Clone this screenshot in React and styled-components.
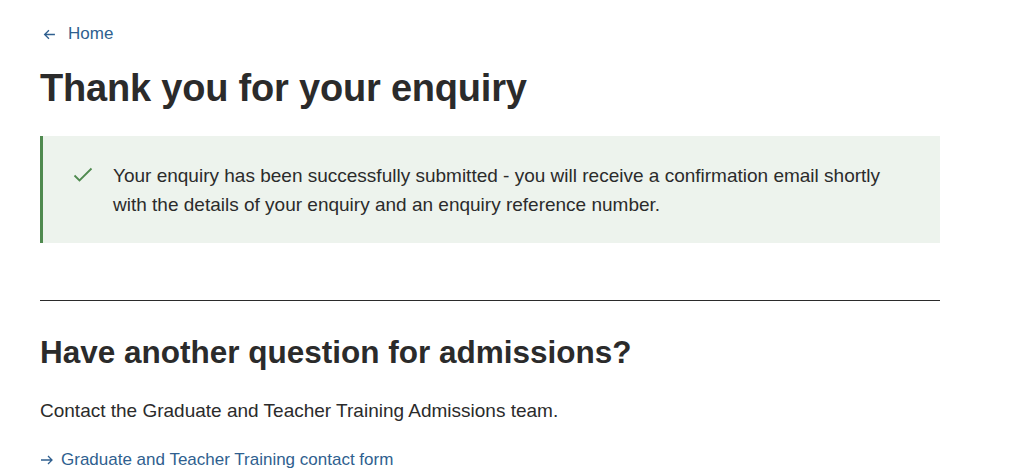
import React from 'react';
import styled, { createGlobalStyle } from 'styled-components';

const GlobalStyle = createGlobalStyle`
  html, body {
    margin: 0;
    padding: 0;
    background: #fff;
  }
  body {
    font-family: "Liberation Sans", Arial, sans-serif;
    color: #2b2b2b;
  }
`;

const Page = styled.main`
  width: 900px;
  padding: 24px 0 0 40px;
`;

const BackLink = styled.a`
  display: inline-flex;
  align-items: center;
  gap: 12px;
  color: #2f5f8f;
  font-size: 17px;
  text-decoration: none;
  margin-left: 3px;
`;

const Title = styled.h1`
  margin: 22px 0 0;
  font-size: 38px;
  font-weight: 700;
  color: #2b2b2b;
  letter-spacing: -0.2px;
`;

const SuccessPanel = styled.div`
  margin-top: 26px;
  background: #edf3ed;
  border-left: 3px solid #4f8a4f;
  display: flex;
  align-items: flex-start;
  gap: 20px;
  padding: 25px 20px 24px 30px;
`;

const PanelText = styled.p`
  margin: 0;
  font-size: 19px;
  line-height: 29px;
  color: #2b2b2b;
`;

const CheckWrap = styled.span`
  display: flex;
  padding-top: 6px;
`;

const Rule = styled.hr`
  margin: 57px 0 0;
  border: 0;
  border-top: 1px solid #2b2b2b;
`;

const SubTitle = styled.h2`
  margin: 33px 0 0;
  font-size: 31.5px;
  font-weight: 700;
  color: #2b2b2b;
`;

const Body = styled.p`
  margin: 29px 0 0;
  font-size: 19px;
  color: #2b2b2b;
`;

const ForwardLink = styled.a`
  display: inline-flex;
  align-items: center;
  gap: 7px;
  margin-top: 28px;
  color: #2f5f8f;
  font-size: 17px;
  text-decoration: none;
`;

const ArrowLeft = () => (
  <svg width="13" height="13" viewBox="0 0 12 12" fill="none" stroke="#2f5f8f" strokeWidth="1.2">
    <path d="M11 6H1.5M5.5 2L1.5 6l4 4" />
  </svg>
);

const ArrowRight = () => (
  <svg width="14" height="12" viewBox="0 0 14 12" fill="none" stroke="#2f5f8f" strokeWidth="1.3">
    <path d="M1 6h11M8 2l4 4-4 4" />
  </svg>
);

const Check = () => (
  <svg width="20" height="16" viewBox="0 0 20 16" fill="none" stroke="#4f8a4f" strokeWidth="1.8">
    <path d="M1.5 8.5l5 5L18.5 1.5" />
  </svg>
);

const App = () => (
  <>
    <GlobalStyle />
    <Page>
      <BackLink href="#">
        <ArrowLeft />
        Home
      </BackLink>
      <Title>Thank you for your enquiry</Title>
      <SuccessPanel>
        <CheckWrap>
          <Check />
        </CheckWrap>
        <PanelText>
          Your enquiry has been successfully submitted - you will receive a confirmation email shortly
          <br />
          with the details of your enquiry and an enquiry reference number.
        </PanelText>
      </SuccessPanel>
      <Rule />
      <SubTitle>Have another question for admissions?</SubTitle>
      <Body>Contact the Graduate and Teacher Training Admissions team.</Body>
      <ForwardLink href="#">
        <ArrowRight />
        Graduate and Teacher Training contact form
      </ForwardLink>
    </Page>
  </>
);

export default App;
